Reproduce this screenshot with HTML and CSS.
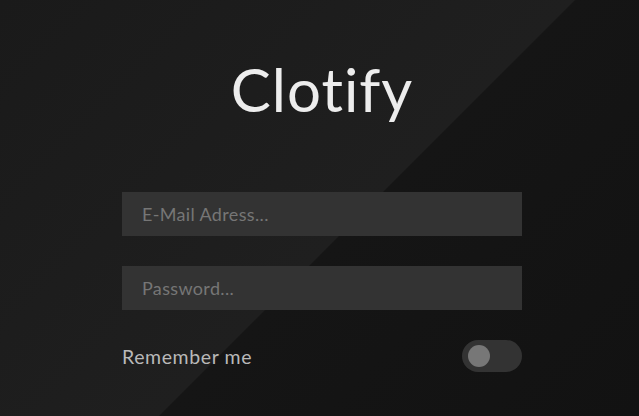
FILE: index.html
```html
<!DOCTYPE html>
<html>
<head>
<meta charset="utf-8">
<link rel="stylesheet" href="styles.css">
</head>
<body>
<main class="page">
  <form class="login">
    <h1 class="brand">Clotify</h1>
    <input class="field" type="email" placeholder="E-Mail Adress...">
    <input class="field" type="password" placeholder="Password...">
    <div class="remember">
      <span class="remember-label">Remember me</span>
      <span class="toggle"><span class="knob"></span></span>
    </div>
  </form>
</main>
</body>
</html>
```
FILE: styles.css
```css
html, body {
  margin: 0;
  height: 100%;
}
body {
  background: linear-gradient(135deg, #1a1a1a 0%, #1f1f1f 54.4%, #151515 54.6%, #121212 100%);
  font-family: "Lato", "Open Sans", sans-serif;
  overflow: hidden;
}
.page {
  padding-left: 122px;
  padding-top: 52px;
}
.login {
  width: 400px;
  display: flex;
  flex-direction: column;
}
.brand {
  margin: 0 0 66px;
  text-align: center;
  font-size: 60px;
  font-weight: 400;
  line-height: 74px;
  color: #ededed;
  letter-spacing: 1px;
}
.field {
  box-sizing: border-box;
  height: 44px;
  border: none;
  outline: none;
  background: #333333;
  padding: 0 20px;
  font-family: inherit;
  font-size: 18px;
  letter-spacing: 0.35px;
  color: #ddd;
  margin-bottom: 30px;
}
.field::placeholder {
  color: #767676;
}
.remember {
  display: flex;
  align-items: center;
  justify-content: space-between;
}
.remember-label {
  font-size: 19.5px;
  letter-spacing: 0.6px;
  color: #b9b9b9;
}
.toggle {
  width: 60px;
  height: 32px;
  border-radius: 16px;
  background: #333333;
  display: flex;
  align-items: center;
  padding-left: 6px;
  box-sizing: border-box;
}
.knob {
  width: 22px;
  height: 22px;
  border-radius: 50%;
  background: #777777;
}
```
